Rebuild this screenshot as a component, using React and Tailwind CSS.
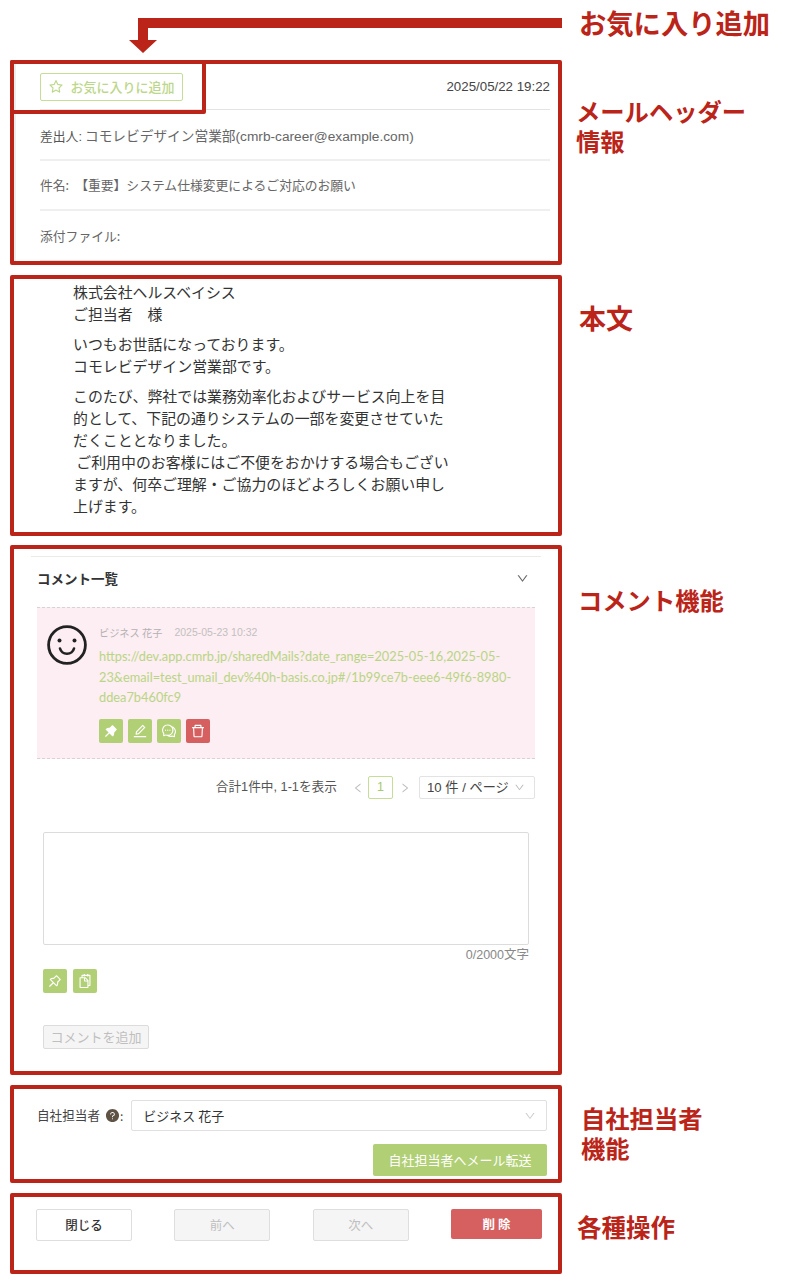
import React from "react";
import {
  AiFillPushpin,
  AiFillQuestionCircle,
  AiOutlineComment,
  AiOutlineDelete,
  AiOutlineDown,
  AiOutlineEdit,
  AiOutlineLeft,
  AiOutlinePushpin,
  AiOutlineRight,
  AiOutlineSnippets,
  AiOutlineStar,
} from "react-icons/ai";

const FONT = "font-['Noto_Sans_CJK_JP','Noto_Sans',sans-serif]";
const LATIN = "font-['Liberation_Sans','Noto_Sans_CJK_JP',sans-serif]";

function Row({ label, labelClass, children }) {
  return (
    <div className="flex items-start">
      {children}
      <div className={`text-[#bb2418] font-bold leading-[30px] whitespace-nowrap ${labelClass}`}>{label}</div>
    </div>
  );
}

function IconBtn({ children, red }) {
  return (
    <button className={`w-6 h-6 rounded-[2px] flex items-center justify-center text-white text-[16px] ${red ? "bg-[#d66060]" : "bg-[#b1cf75]"}`}>
      {children}
    </button>
  );
}

function Avatar() {
  return (
    <svg width="40" height="40" viewBox="0 0 40 40" fill="none" className="shrink-0">
      <circle cx="20" cy="20" r="18.4" stroke="#222" strokeWidth="2.8" />
      <circle cx="12.5" cy="15.5" r="2" fill="#222" />
      <circle cx="27.5" cy="15.5" r="2" fill="#222" />
      <path d="M13 23.5c1 3.6 3.800 5.200 7 5.200s6-1.600 7-5.200" stroke="#222" strokeWidth="2.600" strokeLinecap="round" />
    </svg>
  );
}

export default function App() {
  const section = "relative w-[552px] shrink-0 box-border border-4 border-[#bb2418] rounded-[2px] bg-white";
  return (
    <div className={`w-[785px] h-[1284px] bg-white pl-[10px] overflow-hidden ${FONT}`}>
      <Row label="お気に入り追加" labelClass="text-[27.300px] ml-[17px] mt-[7px]">
        <div className="w-[552px] h-[60px] shrink-0">
          <svg width="552" height="60" viewBox="0 0 552 60">
            <path d="M552 18H128V40H119L133 53L147 40H138V28H552Z" fill="#bb2418" />
          </svg>
        </div>
      </Row>

      <Row label={<>メールヘッダー<br />情報</>} labelClass="text-[24.300px] ml-[14px] mt-[36px]">
        <section className={`${section} h-[205px] pl-[26px] pr-2 shadow-[inset_2px_0_0_#eeeeee]`}>
          <div className="absolute -left-1 -top-1 w-[196px] h-[54px] border-4 border-[#bb2418] rounded-[2px]" />
          <div className="h-[46px] flex items-center justify-between border-b border-[#e3e3e3]">
            <button className="h-[28px] w-[143px] border border-[#c5dd96] rounded-[2px] flex items-center justify-center gap-[6px] text-[13px] text-[#bdd78a] font-medium whitespace-nowrap">
              <AiOutlineStar className="text-[16px]" />
              <span>お気に入りに追加</span>
            </button>
            <span className={`text-[13.300px] text-[#444] ${LATIN}`}>2025/05/22 19:22</span>
          </div>
          <div className={`h-[51px] flex items-center border-b-2 border-[#efefef] text-[13.700px] text-[#666] pt-[5px] ${LATIN}`}>
            <span className="text-[12.800px] text-[#555]">差出人:</span>
            <span className="ml-[3px]">コモレビデザイン営業部(cmrb-career@example.com)</span>
          </div>
          <div className="h-[50px] flex items-center border-b-2 border-[#efefef] text-[12.800px] text-[#666]">
            <span>件名:</span>
            <span className="ml-[6px]">【重要】システム仕様変更によるご対応のお願い</span>
          </div>
          <div className="h-[50px] flex items-center border-b border-[#dcdcdc] text-[12.800px] text-[#666]">
            添付ファイル:
          </div>
        </section>
      </Row>

      <div className="h-[10px]" />
      <Row label="本文" labelClass="text-[27px] ml-[17px] mt-[28px]">
        <section className={`${section} h-[261px] pl-[59px] pt-[2px] text-[14.900px] leading-[22px] text-[#333] whitespace-nowrap`}>
          <p>株式会社ヘルスベイシス<br />ご担当者　様</p>
          <p className="mt-2">いつもお世話になっております。<br />コモレビデザイン営業部です。</p>
          <p className="mt-2">
            このたび、弊社では業務効率化およびサービス向上を目<br />
            的として、下記の通りシステムの一部を変更させていた<br />
            だくこととなりました。<br />
            &nbsp;ご利用中のお客様にはご不便をおかけする場合もござい<br />
            ますが、何卒ご理解・ご協力のほどよろしくお願い申し<br />
            上げます。
          </p>
        </section>
      </Row>

      <div className="h-[9px]" />
      <Row label="コメント機能" labelClass="text-[24.300px] ml-[16px] mt-[40px]">
        <section className={`${section} h-[530px] px-[23px]`}>
          <div className="mt-[7px] -mx-[6px] border-t border-[#ebebeb]" />
          <div className="h-[43px] flex items-center justify-between pr-[6px]">
            <span className="text-[13.500px] font-bold text-[#333]">コメント一覧</span>
            <AiOutlineDown className="text-[13px] text-[#666]" />
          </div>
          <div className="mt-[7px] h-[152px] box-border bg-[#fceef2] border-y border-dashed border-[#d8d2d4] pl-[10px] pt-[17px] flex gap-3">
            <Avatar />
            <div className="min-w-0">
              <div className="h-4 flex items-center gap-3 text-[#b5b0b2] whitespace-nowrap">
                <span className="text-[10.200px]">ビジネス 花子</span>
                <span className={`text-[10.500px] text-[#c4bfc1] ${LATIN}`}>2025-05-23 10:32</span>
              </div>
              <a className="block mt-[5px] text-[12.800px] leading-[20.500px] text-[#b9d583] whitespace-nowrap font-['Lato',sans-serif]">
                https://dev.app.cmrb.jp/sharedMails?date_range=2025-05-16,2025-05-<br />
                23&amp;email=test_umail_dev%40h-basis.co.jp#/1b99ce7b-eee6-49f6-8980-<br />
                ddea7b460fc9
              </a>
              <div className="mt-[11px] flex gap-[5px]">
                <IconBtn><AiFillPushpin /></IconBtn>
                <IconBtn><AiOutlineEdit /></IconBtn>
                <IconBtn><AiOutlineComment /></IconBtn>
                <IconBtn red><AiOutlineDelete /></IconBtn>
              </div>
            </div>
          </div>
          <div className="mt-[17px] h-[23px] flex items-center justify-end">
            <span className={`text-[12.700px] text-[#555] ${LATIN}`}>合計1件中, 1-1を表示</span>
            <AiOutlineLeft className="ml-[15px] text-[12px] text-[#bbb]" />
            <span className={`ml-[4px] w-[25px] h-[23px] border border-[#c5dd96] rounded-[2px] flex items-center justify-center text-[12.500px] text-[#a9c96c] ${LATIN}`}>1</span>
            <AiOutlineRight className="ml-[6px] text-[12px] text-[#bbb]" />
            <div className={`ml-[8px] w-[116px] h-[23px] border border-[#e3e3e3] rounded-[2px] flex items-center justify-between pl-[7px] pr-[9px] text-[13.200px] text-[#444] whitespace-nowrap ${LATIN}`}>
              <span>10 件 / ページ</span>
              <AiOutlineDown className="text-[11px] text-[#bbb]" />
            </div>
          </div>
          <div className="mt-[33px] ml-[6px] w-[486px] h-[113px] border border-[#dcdcdc] rounded-[2px]" />
          <div className={`ml-[6px] w-[486px] mt-px h-[18px] flex items-center justify-end text-[12.500px] text-[#888] ${LATIN}`}>0/2000文字</div>
          <div className="mt-[5px] ml-[6px] flex gap-[6px]">
            <IconBtn><AiOutlinePushpin /></IconBtn>
            <IconBtn><AiOutlineSnippets /></IconBtn>
          </div>
          <button className="mt-[32px] ml-[6px] w-[106px] h-[24px] bg-[#f5f5f5] border border-[#dcdcdc] rounded-[2px] text-[13px] text-[#bfbfbf] flex items-center justify-center whitespace-nowrap">
            コメントを追加
          </button>
        </section>
      </Row>

      <div className="h-[10px]" />
      <Row label={<>自社担当者<br />機能</>} labelClass="text-[24.300px] ml-[19px] mt-[18px]">
        <section className={`${section} h-[98px] pl-[23px] pr-[11px] pt-[11px]`}>
          <div className="flex items-center h-[31px]">
            <span className="w-[63px] text-[12.600px] text-[#444] whitespace-nowrap">自社担当者</span>
            <AiFillQuestionCircle className="ml-[5px] text-[15px] text-[#5f5346]" />
            <span className="text-[12px] text-[#444]">:</span>
            <div className="ml-2 flex-1 h-[31px] border border-[#e0e0e0] rounded-[2px] flex items-center justify-between pl-[11px] pr-[10px] text-[13px] text-[#333]">
              <span>ビジネス 花子</span>
              <AiOutlineDown className="text-[12px] text-[#ccc]" />
            </div>
          </div>
          <div className="mt-[13px] flex justify-end">
            <button className="w-[174px] h-[32px] bg-[#b1cf75] rounded-[2px] text-[13px] text-white">自社担当者へメール転送</button>
          </div>
        </section>
      </Row>

      <div className="h-[10px]" />
      <Row label="各種操作" labelClass="text-[24.500px] ml-[15px] mt-[19px]">
        <section className={`${section} h-[81px] pl-[22px] pr-[16px] pt-[12px] flex items-start justify-between`}>
          <button className="w-[96px] h-[32px] border border-[#dedede] rounded-[2px] bg-white text-[12.500px] font-medium text-[#333]">閉じる</button>
          <button className="w-[96px] h-[32px] border border-[#dedede] rounded-[2px] bg-[#f5f5f5] text-[12.500px] text-[#bfbfbf]">前へ</button>
          <button className="w-[96px] h-[32px] border border-[#dedede] rounded-[2px] bg-[#f5f5f5] text-[12.500px] text-[#bfbfbf]">次へ</button>
          <button className="w-[91px] h-[30px] rounded-[2px] bg-[#d66060] text-[12.500px] font-bold text-white">削 除</button>
        </section>
      </Row>
    </div>
  );
}
